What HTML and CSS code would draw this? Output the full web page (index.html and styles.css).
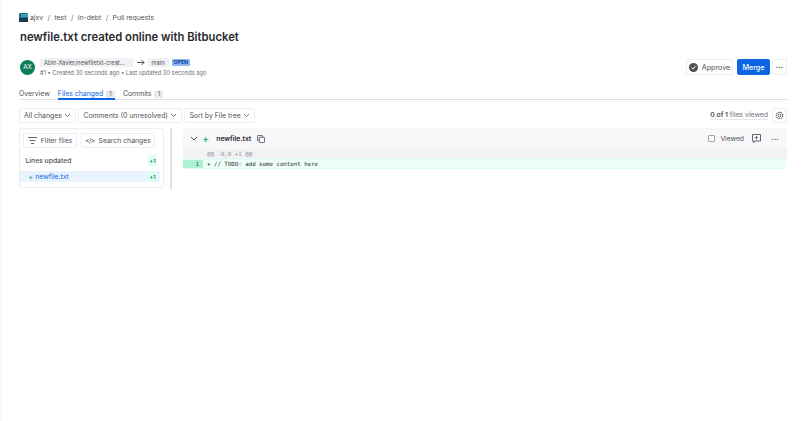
FILE: index.html
```html
<!DOCTYPE html>
<html lang="en">
<head>
<meta charset="utf-8">
<title>newfile.txt created online with Bitbucket</title>
<link rel="stylesheet" href="styles.css">
</head>
<body>
<main class="page">
  <nav class="crumbs">
    <svg class="logo" width="9" height="9" viewBox="0 0 9 9"><rect width="9" height="9" rx="1" fill="#1f6f8b"/><rect y="5" width="9" height="4" fill="#16394f"/><rect x="2" y="1" width="7" height="3" fill="#35a0b8"/></svg>
    <span>ajxv</span><span class="sep">/</span><span>test</span><span class="sep">/</span><span>in-debt</span><span class="sep">/</span><span>Pull requests</span>
  </nav>
  <h1 class="title">newfile.txt created online with Bitbucket</h1>
  <section class="meta">
    <div class="meta-left">
      <div class="avatar">AX</div>
      <div class="meta-text">
        <div class="branches">
          <span class="branch">Abin-Xavier/newfiletxt-creat...</span>
          <svg class="arrow" width="8" height="7" viewBox="0 0 8 7"><path d="M0 3.5h7M4.5 1l2.5 2.5L4.5 6" fill="none" stroke="#505258" stroke-width="1"/></svg>
          <span class="branch branch-short">main</span>
          <span class="lozenge">OPEN</span>
        </div>
        <div class="sub">#1 • Created 30 seconds ago • Last updated 30 seconds ago</div>
      </div>
    </div>
    <div class="actions">
      <button class="btn approve"><svg width="9" height="9" viewBox="0 0 9 9"><circle cx="4.5" cy="4.5" r="4.5" fill="#505258"/><path d="M2.5 4.6l1.5 1.4 2.5-3" fill="none" stroke="#fff" stroke-width="1"/></svg>Approve</button>
      <button class="btn merge">Merge</button>
      <button class="btn more">···</button>
    </div>
  </section>
  <div class="tabs">
    <span class="tab">Overview</span>
    <span class="tab active">Files changed <b class="count">1</b></span>
    <span class="tab">Commits <b class="count">1</b></span>
  </div>
  <div class="toolbar">
    <div class="filters">
      <button class="btn select">All changes <svg width="7" height="5" viewBox="0 0 7 5"><path d="M1 1l2.5 2.5L6 1" fill="none" stroke="#505258" stroke-width=".8"/></svg></button>
      <button class="btn select">Comments (0 unresolved) <svg width="7" height="5" viewBox="0 0 7 5"><path d="M1 1l2.5 2.5L6 1" fill="none" stroke="#505258" stroke-width=".8"/></svg></button>
      <button class="btn select">Sort by File tree <svg width="7" height="5" viewBox="0 0 7 5"><path d="M1 1l2.5 2.5L6 1" fill="none" stroke="#505258" stroke-width=".8"/></svg></button>
    </div>
    <div class="viewed-wrap">
      <span class="viewed-count"><b>0 of 1</b> files viewed</span>
      <button class="btn gear"><svg width="9" height="9" viewBox="0 0 10 10"><circle cx="5" cy="5" r="1.5" fill="none" stroke="#505258" stroke-width=".9"/><circle cx="5" cy="5" r="3.6" fill="none" stroke="#505258" stroke-width="1.2" stroke-dasharray="1.6 .9"/></svg></button>
    </div>
  </div>
  <div class="workspace">
    <aside class="sidebar">
      <div class="side-buttons">
        <button class="btn side-btn"><svg width="9" height="7" viewBox="0 0 9 7"><path d="M0 .5h9M1.5 3.5h6M3 6.5h3" stroke="#505258" stroke-width=".9" fill="none"/></svg>Filter files</button>
        <button class="btn side-btn"><span class="code">&lt;/&gt;</span>Search changes</button>
      </div>
      <div class="side-row head"><span>Lines updated</span><span class="plus">+1</span></div>
      <div class="side-row file"><span class="file-name"><i class="green">+</i>newfile.txt</span><span class="plus">+1</span></div>
    </aside>
    <div class="divider"></div>
    <section class="diff">
      <header class="diff-head">
        <div class="diff-name">
          <svg width="8" height="6" viewBox="0 0 8 6"><path d="M1 1l3 3 3-3" fill="none" stroke="#505258" stroke-width="1"/></svg>
          <i class="green big">+</i>
          <span class="fname">newfile.txt</span>
          <svg width="8" height="8" viewBox="0 0 9 9"><rect x=".5" y=".5" width="6" height="6" rx="1" fill="none" stroke="#505258"/><rect x="2.5" y="2.5" width="6" height="6" rx="1" fill="#f7f8f9" stroke="#505258"/></svg>
        </div>
        <div class="diff-tools">
          <span class="check"></span><span class="viewed">Viewed</span>
          <svg class="comment" width="9" height="9" viewBox="0 0 9 9"><path d="M.5.5h8v6.5H3L1.5 8.5V7h-1z" fill="none" stroke="#505258" stroke-width=".9"/><path d="M4.5 2v3.5M2.8 3.7h3.4" stroke="#505258" stroke-width=".8"/></svg>
          <span class="dots">···</span>
        </div>
      </header>
      <div class="hunk"><span class="gutter"></span><code>@@ -0,0 +1 @@</code></div>
      <div class="line"><span class="gutter added">1</span><code>+ // TODO: add some content here</code></div>
    </section>
  </div>
</main>
</body>
</html>
```
FILE: styles.css
```css
* { box-sizing: border-box; }
html, body { margin: 0; height: 100%; }
body {
  font-family: Inter, "Liberation Sans", sans-serif;
  color: #505258;
  background: #fff;
  overflow: hidden;
}
.page {
  height: 421px;
  padding: 13px 19px 0 17px;
  margin-left: 1px;
  border-left: 1px solid #f1f2f4;
}
button { font-family: inherit; }
.crumbs { display: flex; align-items: center; height: 9px; font-size: 6.8px; gap: 4px; }
.crumbs .sep { color: #6b6e76; margin: 0 .5px; }
.logo { margin-right: -2px; }
.title { margin: 7.5px 0 0 1px; font-size: 11.25px; line-height: 14px; font-weight: 600; color: #292a2e; }
.meta { display: flex; justify-content: space-between; align-items: center; margin-top: 13.5px; height: 20px; }
.meta-left { display: flex; align-items: center; gap: 5px; margin-left: 1px; }
.avatar {
  width: 15px; height: 15px; border-radius: 50%;
  background: #0a7d5a; color: #fff; font-size: 6.3px;
  display: flex; align-items: center; justify-content: center;
}
.meta-text { display: flex; flex-direction: column; gap: 2px; }
.branches { display: flex; align-items: center; height: 9px; gap: 3px; }
.branch { background: #f1f2f4; font-size: 5.7px; height: 9px; line-height: 9px; padding: 0 9px 0 4px; border-radius: 1px; white-space: nowrap; }
.branch-short { padding: 0 4px; width: 21px; }
.lozenge { background: #8fb8f6; color: #0c3d91; font-size: 5.2px; font-weight: 700; padding: 0 2px; height: 7px; line-height: 7px; border-radius: 1px; width: 18px; text-align: center; }
.sub { font-size: 5.75px; line-height: 8px; color: #6b6e76; white-space: nowrap; }
.actions { display: flex; align-items: center; gap: 3px; }
.btn {
  background: #fff; border: 1px solid #eceef1; border-radius: 2px;
  color: #505258; padding: 0; cursor: pointer;
  display: inline-flex; align-items: center; justify-content: center;
}
.approve { width: 47px; height: 16px; font-size: 7.2px; gap: 4px; margin-right: 1px; }
.merge { width: 33px; height: 16px; font-size: 7.2px; background: #0c66e4; border-color: #0c66e4; color: #fff; font-weight: 500; margin-right: -1px; }
.more { width: 15px; height: 16px; font-size: 7.5px; font-weight: 700; }
.tabs { display: flex; align-items: flex-start; gap: 8px; height: 14px; margin-top: 9px; border-bottom: 1px solid #dcdfe4; }
.tab { font-size: 6.9px; line-height: 9px; height: 14px; padding-top: 3px; white-space: nowrap; }
.tab.active { color: #0c66e4; border-bottom: 2px solid #0c66e4; }
.count { display: inline-block; background: #e6e8ec; color: #505258; font-size: 5.6px; font-weight: 400; height: 7px; line-height: 7px; padding: 0 3.5px; margin-left: .5px; border-radius: 1px; vertical-align: 0; }
.toolbar { display: flex; justify-content: space-between; align-items: center; margin-top: 8px; height: 15px; }
.filters { display: flex; gap: 2.5px; }
.select { height: 15px; font-size: 6.9px; padding: 0 4px; gap: 2px; white-space: nowrap; }
.viewed-wrap { display: flex; align-items: center; gap: 4px; }
.viewed-count { font-size: 6.8px; color: #6b6e76; border-bottom: 1px solid #e6e8ec; line-height: 8px; }
.viewed-count b { color: #505258; font-weight: 600; }
.gear { width: 15px; height: 15px; }
.workspace { display: flex; align-items: flex-start; margin-top: 5px; gap: 6px; }
.sidebar { width: 145px; height: 60px; border: 1px solid #eceef1; border-radius: 2px; padding: 4px 3px 0; flex: none; }
.side-buttons { display: flex; gap: 4px; }
.side-btn { height: 15px; font-size: 6.85px; gap: 4px; white-space: nowrap; }
.side-btn:first-child { width: 54px; }
.side-btn:last-child { width: 74px; }
.code { font-size: 6.5px; letter-spacing: -.5px; }
.side-row { display: flex; justify-content: space-between; align-items: center; height: 11px; font-size: 6.8px; }
.head { margin-top: 7px; font-weight: 500; padding: 0 3px 0 2.5px; }
.file { margin: 5px 0 0 -3px; padding: 0 3px 0 8px; background: #e9f2ff; color: #0c66e4; }
.file-name { display: flex; align-items: center; gap: 2px; }
.green { color: #22a06b; font-style: normal; font-size: 8px; line-height: 8px; }
.big { font-size: 11px; line-height: 10px; }
.plus { background: #dcfff1; color: #216e4e; font-size: 5.4px; font-weight: 600; height: 100%; width: 9px; justify-content: center; display: flex; align-items: center; border-radius: 1px; }
.divider { width: 2px; height: 61px; background: #dcdfe4; flex: none; margin-right: 5px; }
.diff { flex: 1; border-radius: 3px; overflow: hidden; }
.diff-head { display: flex; justify-content: space-between; align-items: center; height: 21px; background: #f7f8f9; padding: 0 8px 0 7px; }
.diff-name { display: flex; align-items: center; gap: 4px; }
.fname { font-size: 6.8px; font-weight: 600; color: #292a2e; margin: 0 2px 0 3px; }
.diff-tools { display: flex; align-items: center; }
.check { width: 7px; height: 7px; border: 1px solid #a0a3aa; border-radius: 1px; background: #fff; margin-right: 5px; }
.viewed { font-size: 6.75px; margin-right: 8px; }
.comment { margin-right: 10px; }
.dots { font-size: 8px; font-weight: 700; line-height: 8px; }
.hunk, .line { display: flex; height: 10px; align-items: center; }
.hunk { background: #f1f2f4; color: #8c8f97; height: 9.5px; }
.line { background: #effff8; border-bottom: 1px solid #dcfff1; border-top: 1px solid #dcfff1; color: #292a2e; }
.gutter { width: 20px; height: 100%; flex: none; font-size: 5.9px; text-align: right; padding-right: 4px; line-height: 9px; font-family: "DejaVu Sans Mono", monospace; }
.added { background: #aef0d3; color: #216e4e; }
code { font-family: "DejaVu Sans Mono", monospace; font-size: 5.78px; margin-left: 4px; white-space: pre; }
```
